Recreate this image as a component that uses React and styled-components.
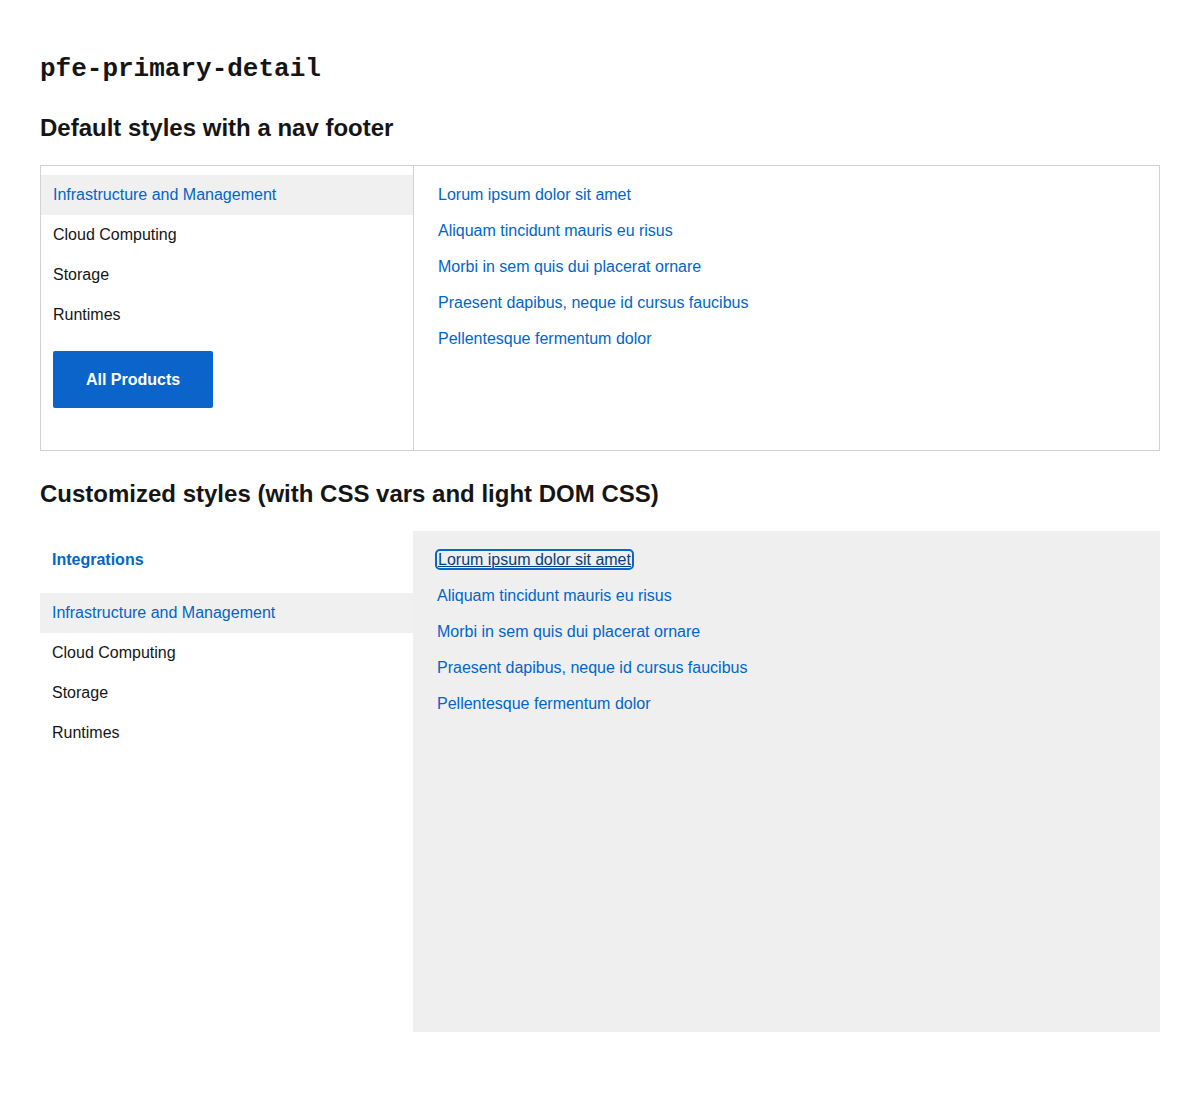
import React from "react"
import styled, { createGlobalStyle } from "styled-components"

const GlobalStyle = createGlobalStyle`
  body {
    margin: 0;
    background: #fff;
    font-family: "Liberation Sans", Arial, sans-serif;
    color: #151515;
  }
`

const Page = styled.main`
  padding: 53px 40px 60px;
`

const Title = styled.h1`
  margin: 0;
  font-family: "Liberation Mono", "Courier New", monospace;
  font-size: 26px;
  line-height: 32px;
  font-weight: 700;
`

const Heading = styled.h2`
  margin: 27px 0 21px;
  font-size: 24px;
  line-height: 32px;
  font-weight: 700;
`

const Detail = styled.section`
  display: grid;
  grid-template-columns: 373px 1fr;
  border: ${(p) => (p.$custom ? "none" : "1px solid #d2d2d2")};
  min-height: ${(p) => (p.$custom ? "501px" : "auto")};
`

const Primary = styled.div`
  display: flex;
  flex-direction: column;
  padding-top: 9px;
  border-right: ${(p) => (p.$custom ? "none" : "1px solid #d2d2d2")};
`

const NavHeader = styled.div`
  padding: 0 12px;
  height: 40px;
  display: flex;
  align-items: center;
  margin-bottom: 13px;
  font-size: 16px;
  font-weight: 700;
  color: #0066cc;
`

const NavItem = styled.div`
  height: 40px;
  display: flex;
  align-items: center;
  padding: 0 12px;
  font-size: 16px;
  color: ${(p) => (p.$active ? "#0066cc" : "#151515")};
  background: ${(p) => (p.$active ? "#f0f0f0" : "transparent")};
  cursor: pointer;
`

const NavFooter = styled.div`
  padding: 16px 12px 42px;
`

const Button = styled.button`
  width: 160px;
  height: 57px;
  border: none;
  border-radius: 2px;
  background: #0b64c9;
  color: #fff;
  font-family: inherit;
  font-size: 16px;
  font-weight: 700;
  cursor: pointer;
`

const DetailPane = styled.div`
  display: flex;
  flex-direction: column;
  align-items: flex-start;
  padding: 11px 24px;
  background: ${(p) => (p.$custom ? "#efefef" : "transparent")};
`

const Link = styled.a`
  display: block;
  height: 36px;
  line-height: 36px;
  font-size: 16px;
  color: #0066cc;
  text-decoration: none;
  cursor: pointer;
`

const FocusLink = styled.span`
  line-height: 18px;
  padding: 0 1px;
  color: #073e7c;
  text-decoration: underline;
  outline: 2px solid #0b64c9;
  outline-offset: 0;
  border-radius: 3px;
`

const navItems = ["Infrastructure and Management", "Cloud Computing", "Storage", "Runtimes"]
const links = [
  "Lorum ipsum dolor sit amet",
  "Aliquam tincidunt mauris eu risus",
  "Morbi in sem quis dui placerat ornare",
  "Praesent dapibus, neque id cursus faucibus",
  "Pellentesque fermentum dolor",
]

const PrimaryDetail = ({ custom }) => (
  <Detail $custom={custom}>
    <Primary $custom={custom}>
      {custom && <NavHeader>Integrations</NavHeader>}
      {navItems.map((item, i) => (
        <NavItem key={item} $active={i === 0}>
          {item}
        </NavItem>
      ))}
      {!custom && (
        <NavFooter>
          <Button>All Products</Button>
        </NavFooter>
      )}
    </Primary>
    <DetailPane $custom={custom}>
      {links.map((l, i) => (
        <Link key={l}>{custom && i === 0 ? <FocusLink>{l}</FocusLink> : l}</Link>
      ))}
    </DetailPane>
  </Detail>
)

export default function App() {
  return (
    <>
      <GlobalStyle />
      <Page>
        <Title>pfe-primary-detail</Title>
        <Heading>Default styles with a nav footer</Heading>
        <PrimaryDetail />
        <Heading>Customized styles (with CSS vars and light DOM CSS)</Heading>
        <PrimaryDetail custom />
      </Page>
    </>
  )
}
